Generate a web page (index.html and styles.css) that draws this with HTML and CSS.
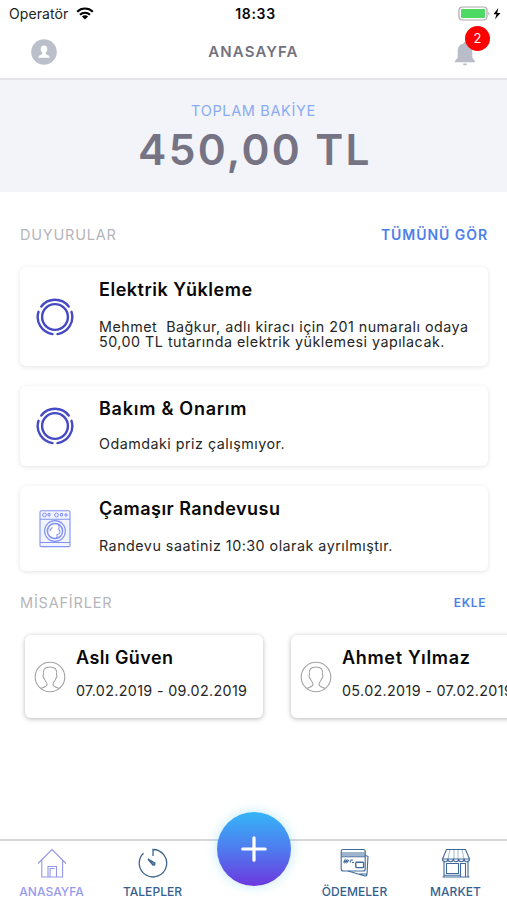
FILE: index.html
```html
<!DOCTYPE html>
<html lang="tr">
<head>
<meta charset="utf-8">
<title>Anasayfa</title>
<link rel="stylesheet" href="styles.css">
</head>
<body>
<svg class="defs" width="0" height="0">
  <symbol id="ring" viewBox="0 0 38 38">
    <g fill="none" stroke="#4549c4" stroke-width="2.4" stroke-linecap="round">
      <circle cx="19" cy="19" r="12.9"/>
      <path d="M5.300 8.500A17.300 17.300 0 0 1 32.700 8.500M2.500 13.800A17.300 17.300 0 0 0 16.500 36.100M35.500 13.800A17.300 17.300 0 0 1 21.500 36.100"/>
    </g>
  </symbol>
  <symbol id="guest" viewBox="0 0 32 32">
    <g fill="none" stroke="#a3a3a3" stroke-width="1.1">
      <circle cx="16" cy="16" r="14.8"/>
      <path d="M6.800 27.500C10 26 13 25.700 13 23.500C13 21 10.800 20 10.300 17.500C9 17 8.700 14.800 9.500 14C8.500 8.500 11 6 16 6S23.500 8.500 22.500 14C23.300 14.800 23 17 21.700 17.500C21.200 20 19 21 19 23.500C19 25.700 22 26 25.200 27.500"/>
    </g>
  </symbol>
</svg>

<div class="status">
  <div class="carrier"><span>Operatör</span>
    <svg width="18" height="13" viewBox="0 0 18 13"><g fill="none" stroke="#000" stroke-width="2.1"><path d="M1.200 4.700A11.200 11.200 0 0 1 16.800 4.700M4 7.700A7.200 7.200 0 0 1 14 7.700"/></g><path d="M9 12.600L5.900 9.500A4.400 4.400 0 0 1 12.100 9.500Z"/></svg>
  </div>
  <div class="clock">18:33</div>
  <div class="power">
    <svg width="44" height="16" viewBox="0 0 44 16"><rect x="1" y="1" width="28" height="13" rx="3.500" fill="#fff" stroke="#aaaaaa" stroke-width="1.200"/><rect x="3" y="3" width="24" height="9" rx="1" fill="#4cd964"/><path d="M30.500 5.500q1.800 2 0 4z" fill="#999"/><path d="M40.200 2L35.500 8.300h3l-1.500 5L42.500 7h-3.200z"/></svg>
  </div>
</div>

<header class="topbar">
  <svg class="profile" width="26" height="26" viewBox="0 0 26 26"><circle cx="13" cy="13" r="12.800" fill="#bbbfc9"/><path d="M13 6.500c2.300 0 3.500 1.600 3.300 3.900-.1 1.500-.8 2.500-1.500 3.200v1.100c0 1 4 1.200 4 4.100H7.200c0-2.900 4-3.100 4-4.100v-1.100c-.7-.7-1.400-1.700-1.500-3.200C9.500 8.100 10.700 6.500 13 6.500z" fill="#fff"/></svg>
  <h1>ANASAYFA</h1>
  <div class="bell">
    <svg width="22" height="26" viewBox="0 0 22 26"><path d="M11 2c1 0 1.500.7 1.500 1.600 4.200.8 5.800 4 5.800 8.200v6l2.700 3.200v1.200H1V21l2.700-3.200v-6c0-4.200 1.600-7.400 5.800-8.200C9.500 2.700 10 2 11 2zM9 23.500h4a2 2 0 0 1-4 0z" fill="#b9bdc9"/></svg>
    <span class="badge">2</span>
  </div>
</header>

<section class="balance">
  <div class="balance-label">TOPLAM BAKİYE</div>
  <div class="balance-value">450,00 TL</div>
</section>

<main>
  <div class="section-head news-head"><h2>DUYURULAR</h2><a class="all">TÜMÜNÜ GÖR</a></div>
  <article class="card c1">
    <svg width="38" height="38"><use href="#ring"/></svg>
    <div class="text"><h3 class="h-a">Elektrik Yükleme</h3>
      <p class="p-a">Mehmet&nbsp; Bağkur, adlı kiracı için 201 numaralı odaya<br>50,00 TL tutarında elektrik yüklemesi yapılacak.</p></div>
  </article>
  <article class="card c2">
    <svg width="38" height="38"><use href="#ring"/></svg>
    <div class="text"><h3 class="h-b">Bakım &amp; Onarım</h3><p class="p-b">Odamdaki priz çalışmıyor.</p></div>
  </article>
  <article class="card c3">
    <svg width="38" height="38" viewBox="0 0 38 38"><g fill="none" stroke="#8292f5" stroke-width="1.100"><rect x="4" y=".8" width="30" height="35.800" rx="1.200" fill="#f2f4ff"/><path d="M4 9.200h30M4 32.500h30"/><g stroke-width="1"><circle cx="8.500" cy="5" r="1.900"/><circle cx="20.500" cy="5" r="1.900"/><path d="M12 3.500h2v2.500h-2zM24.500 3.500h2v2.500h-2zM29 4h2v2h-2z"/></g><circle cx="19" cy="21" r="10.400"/><circle cx="19" cy="21" r="7.600" fill="#fff" stroke-width="1.500"/><path d="M22 14.500c3 2-.5 4 1.200 5.500s.6 4-1.500 4.500 1 2-1.700 3.500M13.500 21c1.500-.5 1-3 3-3.500"/></g></svg>
    <div class="text"><h3 class="h-c">Çamaşır Randevusu</h3><p class="p-c">Randevu saatiniz 10:30 olarak ayrılmıştır.</p></div>
  </article>
  <div class="section-head guest-head"><h2>MİSAFİRLER</h2><a class="add">EKLE</a></div>
  <div class="guests">
    <article class="guest"><svg width="32" height="32"><use href="#guest"/></svg><div><h3 class="g-a">Aslı Güven</h3><p>07.02.2019 - 09.02.2019</p></div></article>
    <article class="guest"><svg width="32" height="32"><use href="#guest"/></svg><div><h3 class="g-b">Ahmet Yılmaz</h3><p>05.02.2019 - 07.02.2019</p></div></article>
  </div>
</main>

<nav>
  <a class="active"><svg width="30" height="30" viewBox="0 0 30 30"><g fill="none" stroke="#9297e8" stroke-width="1.100"><path d="M1 15.500L15 1.500 29 15.500M4.800 12v17h20.800V12M11 29V18.500h8.500V29M13 29v-8.500h4.500"/></g></svg><span>ANASAYFA</span></a>
  <a><svg width="30" height="30" viewBox="0 0 30 30"><g fill="none" stroke="#3c648c" stroke-width="1.300"><path d="M15 8V1.500A13.700 13.700 0 1 1 5.500 5.300"/><path d="M10 11l6.800 4a1.500 1.500 0 0 1-2 2z" fill="#7790ab"/></g></svg><span>TALEPLER</span></a>
  <a class="plus"><svg width="26" height="26" viewBox="0 0 26 26"><path d="M13 1.800v22.400M1.800 13h22.400" stroke="#fff" stroke-width="3.200" stroke-linecap="round"/></svg></a>
  <a><svg width="30" height="30" viewBox="0 0 30 30"><g fill="none" stroke="#416a9b" stroke-width="1.100"><rect x="1.200" y="1.500" width="24" height="21.500" rx="2"/><path d="M1.200 5h24M1.200 7h24M1.200 8.800h24M25.200 7.500l2.800.8L27 26q0 2-2 2L8 23M27 26H19"/><rect x="15.800" y="14.300" width="7.800" height="5.300" rx=".8" stroke-width="1.400"/><path d="M3.500 14.500l1.500-2.500v2.500l2-2.500v2.500l2-2.500M10 14.500l1-2.500h2M12 14.500h2"/></g></svg><span>ÖDEMELER</span></a>
  <a><svg width="30" height="30" viewBox="0 0 30 30"><g fill="none" stroke="#416a9b" stroke-width="1.100"><path d="M5.500 1.500h19L28.500 11h-27zM1.500 11a2.700 2.700 0 0 0 5.400 0 2.700 2.700 0 0 0 5.400 0 2.700 2.700 0 0 0 5.400 0 2.700 2.700 0 0 0 5.400 0 2.700 2.700 0 0 0 5.400 0M3 13.500V29h24V13.500M1.500 29h27"/><path d="M9 1.500L7 11M13 1.500V11M17 1.500V11M21 1.500l2 9.500" stroke-opacity=".45"/><path d="M5.500 15.500h12v10h-12zM19.500 29V15.500h5V29M3 27.200h16.500"/></g></svg><span>MARKET</span></a>
</nav>
</body>
</html>
```
FILE: styles.css
```css
* { box-sizing: border-box; }
body {
  margin: 0; width: 507px; height: 900px; overflow: hidden;
  display: flex; flex-direction: column; background: #fff; color: #080808;
  font-family: Inter, "Liberation Sans", sans-serif;
}
h1, h2, h3, p { margin: 0; white-space: nowrap; }
a, span { white-space: nowrap; }
svg { flex: none; display: block; }
.defs { height: 0; }
.status { height: 28px; flex: none; display: grid; grid-template-columns: 1fr auto 1fr; align-items: center; padding: 0 5px 1px 9px; }
.carrier { display: flex; gap: 8px; align-items: center; font-size: 14px; color: #222; letter-spacing: .1px; }
.clock { font-size: 14px; font-weight: 600; letter-spacing: .65px; }
.power { display: flex; justify-content: flex-end; }
.topbar { height: 52px; flex: none; display: grid; grid-template-columns: 1fr auto 1fr; align-items: center; padding: 0 31px 3px 31px; border-bottom: 2px solid #e5e5e9; }
h1 { font-size: 15px; font-weight: 600; color: #747280; letter-spacing: 1.1px; }
.bell { justify-self: end; position: relative; padding-top: 2px; }
.badge { position: absolute; left: 11px; top: -12px; width: 25px; height: 25px; border-radius: 50%; background: #f00; color: #fff; font-size: 13px; line-height: 24px; text-align: center; }
.balance { height: 112px; flex: none; background: #f3f4f9; text-align: center; padding-top: 20px; }
.balance-label { font-size: 14.500px; line-height: 22px; color: #89abf4; letter-spacing: .65px; }
.balance-value { font-size: 42.500px; line-height: 56px; font-weight: 600; color: #757384; letter-spacing: 2.300px; padding-left: 3px; }
main { flex: 1; padding: 0 19px 0 20px; display: flex; flex-direction: column; }
.section-head { display: flex; justify-content: space-between; align-items: center; flex: none; }
.news-head { height: 75px; padding: 10px 0 0; }
.guest-head { height: 63px; padding: 0 2px 0 0; }
h2 { font-size: 14.500px; font-weight: 400; color: #b5b5ba; letter-spacing: .8px; }
.all { font-size: 14px; font-weight: 600; color: #4c80ea; letter-spacing: .95px; }
.add { font-size: 12px; font-weight: 600; color: #4c80ea; letter-spacing: .6px; }
.card { flex: none; display: flex; align-items: center; gap: 25px; padding-left: 16px; border-radius: 6px; background: #fff; box-shadow: 0 1px 5px rgba(0,0,0,.11); }
.card .text { align-self: stretch; }
h3 { font-size: 18px; font-weight: 600; line-height: 24px; }
p { font-size: 14.300px; line-height: 15px; color: #262626; letter-spacing: .49px; }
.h-a { letter-spacing: .52px; }
.h-b { letter-spacing: .75px; }
.h-c { letter-spacing: .47px; }
.g-a { letter-spacing: .42px; }
.g-b { letter-spacing: .68px; }
.c1 { height: 99px; margin-bottom: 20px; }
.c2 { height: 80px; margin-bottom: 20px; }
.c3 { height: 85px; }
.text { padding-top: 11px; }
.p-a { margin-top: 17px; }
.p-b { margin-top: 15px; }
.p-c { margin-top: 17px; }
.guests { display: flex; gap: 28px; padding: 1px 0 0 5px; margin-right: -19px; }
.guest { flex: none; width: 238px; height: 83px; padding: 11px 0 0 9px; display: flex; gap: 10px; border-radius: 6px; background: #fff; box-shadow: 0 1px 5px rgba(0,0,0,.28); }
.guest svg { margin-top: 15px; }
.guest p { margin-top: 13px; letter-spacing: .35px; }
nav { flex: none; height: 61px; display: grid; grid-template-columns: repeat(5, 101px); border-top: 2px solid #d7d7d9; padding: 7px 0 0 1px; background: #fff; font-size: 12px; color: #35608f; font-weight: 500; letter-spacing: .05px; }
nav a { display: flex; flex-direction: column; align-items: center; gap: 6px; line-height: 15px; }
nav .active { color: #969af0; }
nav .plus { width: 74px; height: 74px; margin: -36px 0 0 14px; border-radius: 50%; justify-content: center; background: linear-gradient(#35b5f8, #5079ee 52%, #6c38df); box-shadow: 0 0 12px rgba(60,190,230,.35); }
```
